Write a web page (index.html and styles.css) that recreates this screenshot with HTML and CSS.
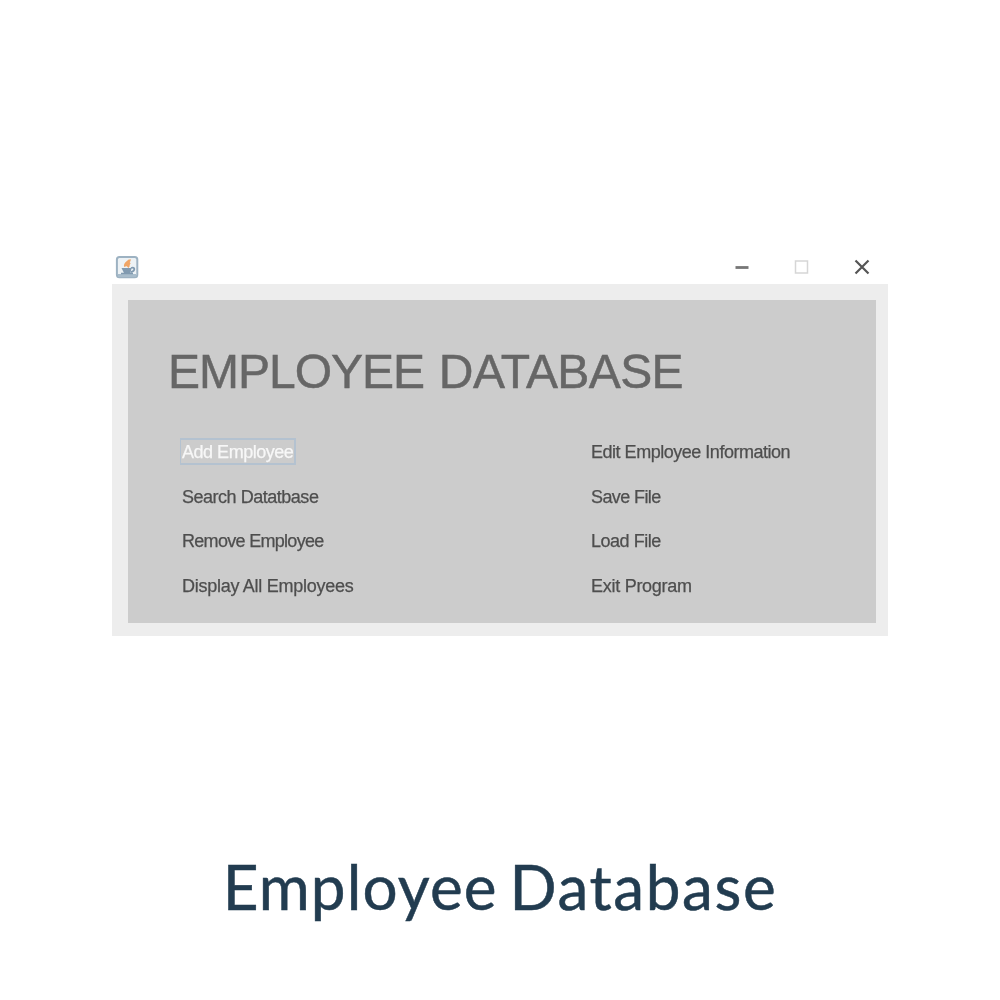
FILE: index.html
```
<!DOCTYPE html>
<html lang="en">
<head>
<meta charset="utf-8">
<title>Employee Database</title>
<link rel="stylesheet" href="styles.css">
</head>
<body>
<main class="page">
  <section class="window">
    <header class="titlebar">
      <svg class="app-icon" width="24" height="24" viewBox="0 0 24 24" fill="none">
        <rect x="1.900" y="1.900" width="20.400" height="20.400" rx="2.500" fill="#edf2f5" stroke="#9db2c2" stroke-width="2"/>
        <path d="M3 20.500H21" stroke="#a8bccb" stroke-width="3"/>
        <path d="M14.500 4.500C15 7 9 7.500 10.500 11.500M15 7.500C12 9 14.500 10.500 12.500 12" stroke="#f0a566" stroke-width="2.800"/>
        <path d="M6.500 13H16.500L15.500 18H9Z" fill="#819ab0"/>
        <path d="M16 13C20.500 11.500 20.500 16 16 17M6 18.500H18" stroke="#819ab0" stroke-width="1.700"/>
      </svg>
      <div class="controls">
        <svg width="16" height="16" viewBox="0 0 16 16"><path d="M1.500 8.500H14.500" stroke="#777" stroke-width="2.800"/></svg>
        <svg width="16" height="16" viewBox="0 0 16 16"><rect x="1.500" y="2" width="12" height="12" fill="none" stroke="#d6d6d6" stroke-width="1.500"/></svg>
        <svg width="16" height="16" viewBox="0 0 16 16"><path d="M1.500 1.500L14.500 14.500M14.500 1.500L1.500 14.500" stroke="#555" stroke-width="2.200"/></svg>
      </div>
    </header>
    <div class="frame">
      <div class="panel">
        <h1 class="heading"><span class="heading-first">EMPLOYEE</span> DATABASE</h1>
        <div class="menu">
          <nav class="column">
            <a class="item selected">Add Employee</a>
            <a class="item">Search Datatbase</a>
            <a class="item tighter">Remove Employee</a>
            <a class="item wide">Display All Employees</a>
          </nav>
          <nav class="column">
            <a class="item">Edit Employee Information</a>
            <a class="item tight">Save File</a>
            <a class="item">Load File</a>
            <a class="item wide">Exit Program</a>
          </nav>
        </div>
      </div>
    </div>
  </section>
  <h2 class="caption"><span class="caption-word">Employee</span><span class="caption-word last">Database</span></h2>
</main>
</body>
</html>
```
FILE: styles.css
```
* { box-sizing: border-box; }
body { margin: 0; background: #fff; font-family: "Liberation Sans", Arial, sans-serif; }
.page { height: 1000px; padding-top: 250px; display: flex; flex-direction: column; align-items: center; overflow: hidden; }
.window { width: 776px; height: 386px; flex: none; }
.titlebar { height: 34px; padding: 5px 18px 5px 3px; display: flex; justify-content: space-between; align-items: center; filter: blur(.6px); }
.controls { display: flex; gap: 44px; }
.controls svg, .app-icon { display: block; }
.frame { height: 352px; padding: 16px 12px 13px 16px; background: #ededed; }
.panel { height: 323px; padding: 45px 40px 0; background: #ccc; }
.heading { margin: 0; height: 54px; font-size: 48px; line-height: 54px; font-weight: 400; letter-spacing: -.6px; word-spacing: 2px; color: #666; -webkit-text-stroke: .5px #666; white-space: nowrap; filter: blur(.6px); }
.heading-first { letter-spacing: -1px; }
.menu { margin: 39px 0 0 12px; display: grid; grid-template-columns: 409px 1fr; filter: blur(.6px); }
.column { display: flex; flex-direction: column; align-items: flex-start; gap: 18px; }
.item { height: 26.600px; padding: 0 1px; border: 2px solid transparent; border-left-width: 1px; font-size: 18px; line-height: 24px; letter-spacing: -.48px; color: #4e4e4e; -webkit-text-stroke: .25px; white-space: nowrap; }
.tight { letter-spacing: -.6px; }
.tighter { letter-spacing: -.7px; }
.wide { letter-spacing: -.27px; }
.selected { color: #f7f7f7; border-color: #b4c2d0; }
.caption { margin: 211px 0 0; height: 78px; display: flex; gap: 12px; font-family: Lato, sans-serif; font-size: 62px; line-height: 78px; font-weight: 400; color: #223c50; -webkit-text-stroke: .5px #223c50; white-space: nowrap; }
.caption-word { letter-spacing: 1.1px; }
.last { letter-spacing: 1.6px; }
```
